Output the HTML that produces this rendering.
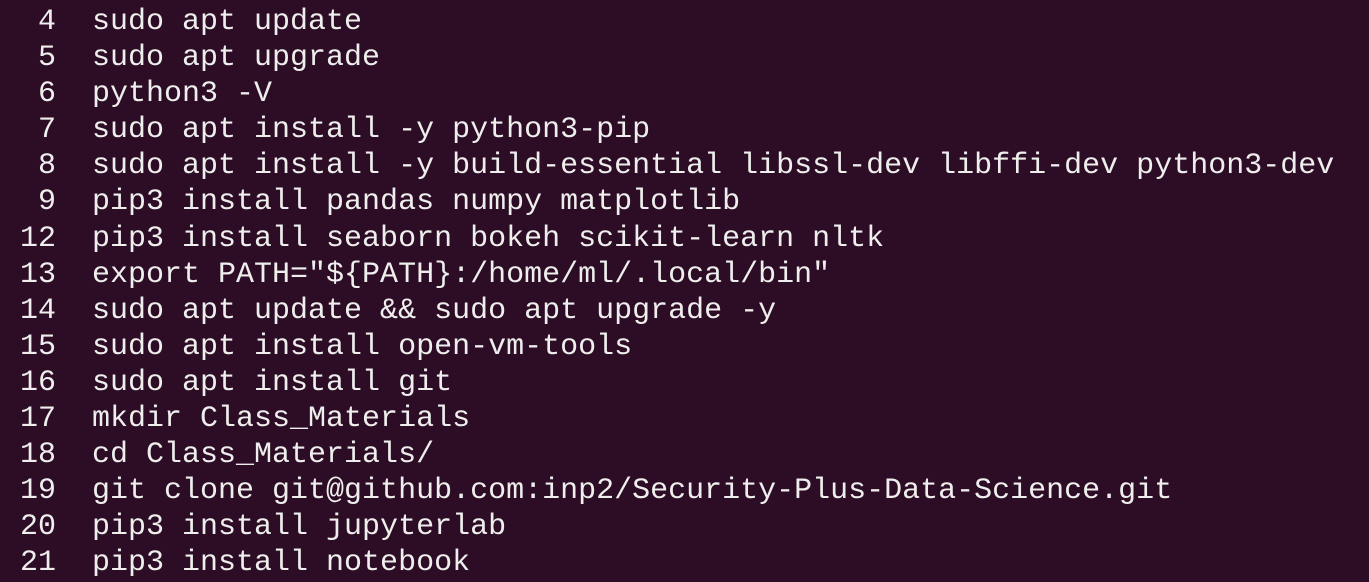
<!DOCTYPE html>
<html><head><meta charset="utf-8"><style>
html,body{margin:0;padding:0;background:#2d0c26;width:1369px;height:582px;overflow:hidden}
pre{margin:0;position:absolute;left:2px;top:4px;font-family:"Liberation Mono",monospace;font-size:30px;line-height:36.1px;color:#eeeeec;white-space:pre}
</style></head><body><pre>  4  sudo apt update
  5  sudo apt upgrade
  6  python3 -V
  7  sudo apt install -y python3-pip
  8  sudo apt install -y build-essential libssl-dev libffi-dev python3-dev
  9  pip3 install pandas numpy matplotlib
 12  pip3 install seaborn bokeh scikit-learn nltk
 13  export PATH="${PATH}:/home/ml/.local/bin"
 14  sudo apt update &amp;&amp; sudo apt upgrade -y
 15  sudo apt install open-vm-tools
 16  sudo apt install git
 17  mkdir Class_Materials
 18  cd Class_Materials/
 19  git clone git@github.com:inp2/Security-Plus-Data-Science.git
 20  pip3 install jupyterlab
 21  pip3 install notebook</pre></body></html>
